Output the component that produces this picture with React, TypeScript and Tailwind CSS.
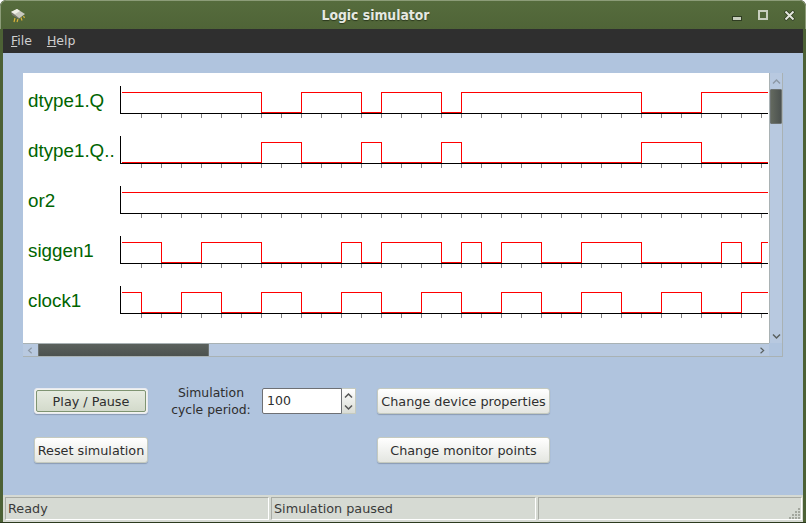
const HIGH_LOW: { label: string; edges: number[]; startHigh: boolean }[] = [
  { label: "dtype1.Q", startHigh: true, edges: [261, 301, 361, 381, 441, 461, 641, 701] },
  { label: "dtype1.Q..", startHigh: false, edges: [261, 301, 361, 381, 441, 461, 641, 701] },
  { label: "or2", startHigh: true, edges: [] },
  { label: "siggen1", startHigh: true, edges: [161, 201, 261, 341, 361, 381, 441, 461, 481, 501, 541, 581, 641, 721, 741, 761] },
  { label: "clock1", startHigh: true, edges: [141, 181, 221, 261, 301, 341, 381, 421, 461, 501, 541, 581, 621, 661, 701, 741] },
];

const TICKS = Array.from({ length: 32 }, (_, i) => 141 + i * 20);

const GRIP_DOTS = [
  [9, 0], [9, 3], [6, 3], [9, 6], [6, 6], [3, 6], [9, 9], [6, 9], [3, 9], [0, 9],
];

const tracePoints = (edges: number[], startHigh: boolean, high: number, low: number) => {
  let level = startHigh;
  const pts = [`122,${level ? high : low}`];
  for (const x of edges) {
    pts.push(`${x},${level ? high : low}`);
    level = !level;
    pts.push(`${x},${level ? high : low}`);
  }
  pts.push(`768,${level ? high : low}`);
  return pts.join(" ");
};

// offset the drawing so coordinates read the same as window pixels
const Waveforms = () => (
  <svg width="746" height="270" viewBox="23 73 746 270" className="block" shapeRendering="crispEdges">
    {HIGH_LOW.map((row, i) => {
      const axis = 113 + i * 50;
      return (
        <g key={row.label}>
          {TICKS.map((x) => (
            <line key={x} x1={x + 0.5} x2={x + 0.5} y1={axis} y2={axis + 5} stroke="#808080" />
          ))}
          <line x1="121" x2="768" y1={axis + 0.5} y2={axis + 0.5} stroke="#000" />
          <line x1="120.5" x2="120.5" y1={axis - 27} y2={axis + 1} stroke="#000" />
          <polyline
            points={tracePoints(row.edges, row.startHigh, axis - 20.5, axis - 0.5)}
            fill="none"
            stroke="#f00"
          />
        </g>
      );
    })}
  </svg>
);

const SignalLabels = () => (
  <div className="absolute left-[5px] top-[3px] flex flex-col whitespace-nowrap font-['Liberation_Sans',sans-serif] text-[18.8px] leading-[50px] text-[#006400]">
    {HIGH_LOW.map((row) => (
      <div key={row.label}>{row.label}</div>
    ))}
  </div>
);

const GtkButton = ({ label, className = "" }: { label: string; className?: string }) => (
  <button className={`h-[26px] whitespace-nowrap rounded-[3px] border border-[#c5cabf] bg-gradient-to-b from-white to-[#e4e6e1] pt-px text-center text-[12.8px] text-[#2e2e2e] shadow-[0_1px_1px_rgba(70,80,100,0.35)] ${className}`}>
    {label}
  </button>
);

const Chevron = ({ d, className = "" }: { d: string; className?: string }) => (
  <svg width="9" height="7" viewBox="0 0 9 7" className={className}>
    <path d={d} fill="none" stroke="currentColor" strokeWidth="1.5" />
  </svg>
);

const ChipIcon = () => (
  <svg width="16" height="16" viewBox="0 0 16 16">
    <path d="M5 11 4 15M8 12l-1 3M11 10.5l1 3M13.5 9l1 2" stroke="#d8b23c" strokeWidth="1.2" fill="none" />
    <path d="M1 5 7 2l8 5-6 4.5z" fill="#c9c9c0" />
    <path d="M1 5 7 2l3 2-5 3z" fill="#f0f0e8" />
    <path d="M1 5l1 3 7 4v-1z" fill="#77776f" />
  </svg>
);

const TitleBar = () => (
  <div className="relative flex h-[29px] items-center rounded-t-[6px] border border-b-0 border-[#8c9c78] bg-gradient-to-b from-[#566c3d] to-[#4f6437] pl-[9px] pr-[10px]">
    <ChipIcon />
    <div className="absolute inset-x-0 pr-[55px] text-center font-['DejaVu_Sans_Condensed','DejaVu_Sans',sans-serif] text-[13.8px] font-bold text-[#e6e9e2] [text-shadow:0_1px_1px_#2c3a1e]">
      Logic simulator
    </div>
    <div className="ml-auto flex items-center gap-[16px]">
      <div className="mt-[6px] h-[5px] w-[10px] border border-[#2f3d22] bg-[#c8cfbf]" />
      <div className="h-[10px] w-[10px] border-2 border-[#c8cfbf]" />
      <svg width="11" height="11" viewBox="0 0 11 11">
        <path d="M1 1 10 10M10 1 1 10" stroke="#2f3d22" strokeWidth="3.6" />
        <path d="M1.5 1.5 9.5 9.5M9.5 1.5 1.5 9.5" stroke="#e3e6dd" strokeWidth="2" />
      </svg>
    </div>
  </div>
);

const MenuBar = () => (
  <div className="flex h-[24px] items-center gap-[15px] bg-[#2f2f2f] pl-[8px] text-[12.5px] text-[#cfcfcf]">
    <span><span className="underline">F</span>ile</span>
    <span><span className="underline">H</span>elp</span>
  </div>
);

const ScrollCanvas = () => (
  <div className="ml-[20px] grid w-[760px] grid-cols-[746px_14px] grid-rows-[270px_14px]">
    <div className="relative bg-white">
      <Waveforms />
      <SignalLabels />
    </div>
    <div className="flex flex-col items-center border-x border-[#a9b2b4] bg-[#b8c9e0] text-[#59605f]">
      <div className="flex h-[16px] items-center justify-center text-[#8d99a6]">
        <Chevron d="M1 5.5 4.5 2 8 5.5" />
      </div>
      <div className="h-[35px] w-full rounded-[1px] border border-[#6d7372] bg-gradient-to-r from-[#63695f] to-[#4c524f]" />
      <div className="mt-auto flex h-[14px] items-center justify-center">
        <Chevron d="M1 1.5 4.5 5 8 1.5" />
      </div>
    </div>
    <div className="flex items-center border-y border-[#a9b2b4] bg-[#b8c9e0]">
      <div className="flex w-[15px] justify-center text-[#8d99a6]">
        <Chevron d="M6 0 2 3.5 6 7" className="w-[7px]" />
      </div>
      <div className="h-full w-[171px] border-x border-[#6d7372] bg-gradient-to-b from-[#5b615d] to-[#4c524f]" />
      <div className="ml-auto flex w-[14px] justify-center text-[#59605f]">
        <Chevron d="M2 0l4 3.5L2 7" className="w-[7px]" />
      </div>
    </div>
    <div className="border-b border-r border-[#a9b2b4]" />
  </div>
);

const SpinBox = () => (
  <div className="flex h-[26px] w-[94px]">
    <div className="flex w-[80px] items-center rounded-l-[2px] border border-[#6e7074] bg-white pl-[4px] pt-px text-[12.5px] text-[#2e2e2e]">
      100
    </div>
    <div className="flex w-[14px] flex-col border border-l-0 border-[#c5cabf] bg-gradient-to-b from-white to-[#d9dcd5] text-[#555]">
      <div className="flex flex-1 items-center justify-center"><Chevron d="M1 5.5 4.5 2 8 5.5" /></div>
      <div className="flex flex-1 items-center justify-center"><Chevron d="M1 1.5 4.5 5 8 1.5" /></div>
    </div>
  </div>
);

const Controls = () => (
  <div className="ml-[31px] mt-[31px] grid grid-cols-[114px_114px_115px_173px] grid-rows-[26px_26px] gap-y-[23px] text-[12.8px] text-[#2e2e2e]">
    <button className="h-[26px] rounded-[3px] border border-[#e8eaf0] bg-[#f2f3ef] p-px shadow-[0_1px_1px_rgba(70,80,100,0.35)]">
      <span className="flex h-full items-center justify-center rounded-[2px] border border-[#7f9472] bg-gradient-to-b from-[#e6ebe0] to-[#d3dacb] pt-px">
        Play / Pause
      </span>
    </button>
    <div className="-mt-[4px] ml-[18px] w-[90px] whitespace-nowrap text-center text-[12.4px] leading-[17px]">
      Simulation
      <br />
      cycle period:
    </div>
    <SpinBox />
    <GtkButton label="Change device properties" />
    <GtkButton label="Reset simulation" />
    <div />
    <div />
    <GtkButton label="Change monitor points" />
  </div>
);

const StatusCell = ({ text, className = "" }: { text?: string; className?: string }) => (
  <div className={`flex h-[23px] items-center border border-[#a9aca5] border-r-white border-b-white pl-[2px] text-[12.8px] text-[#3a3a3a] ${className}`}>
    {text}
  </div>
);

const ResizeGrip = () => (
  <svg width="11" height="11" viewBox="0 0 11 11" className="absolute bottom-[3px] right-[3px]">
    {GRIP_DOTS.map(([x, y]) => (
      <rect key={`${x}-${y}`} x={x} y={y} width="2" height="2" fill="#a3a79e" />
    ))}
  </svg>
);

const StatusBar = () => (
  <div className="relative mt-auto flex h-[27px] gap-[2px] bg-[#d6dad3] pl-[2px] pr-[1px] pt-[2px]">
    <StatusCell text="Ready" className="w-[264px]" />
    <StatusCell text="Simulation paused" className="w-[265px]" />
    <StatusCell className="flex-1" />
    <ResizeGrip />
  </div>
);

export default function App() {
  return (
    <div className="h-[525px] w-[808px] overflow-hidden bg-white font-['DejaVu_Sans',sans-serif]">
      <div className="h-[523px] w-[806px] overflow-hidden rounded-t-[6px] bg-[#2c3a1e] pb-[1px]">
        <TitleBar />
        <div className="flex h-[493px] flex-col border-x-[3px] border-[#4c6135] bg-[#b0c4de]">
          <MenuBar />
          <div className="mt-[20px]">
            <ScrollCanvas />
            <Controls />
          </div>
          <StatusBar />
        </div>
      </div>
    </div>
  );
}
